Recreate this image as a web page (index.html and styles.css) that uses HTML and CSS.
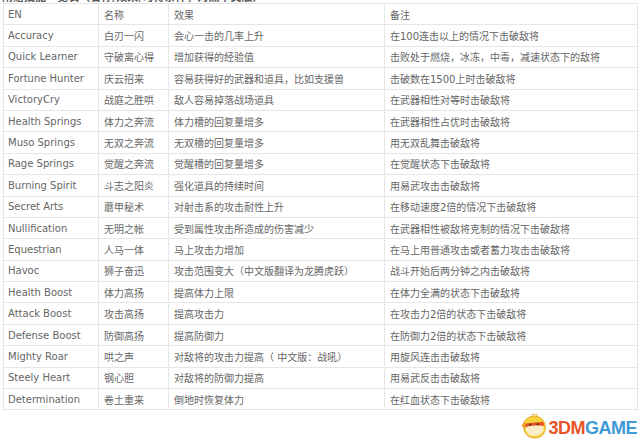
FILE: index.html
```html
<!DOCTYPE html>
<html lang="zh">
<head>
<meta charset="utf-8">
<link rel="stylesheet" href="styles.css">
</head>
<body>
<div class="caption">附赠技能一览表（名称/效果/习得条件，对照中文版）</div>
<table class="skills">
  <colgroup>
    <col class="c-en"><col class="c-name"><col class="c-eff"><col class="c-note">
  </colgroup>
  <tr><td>EN</td><td>名称</td><td>效果</td><td>备注</td></tr>
  <tr><td>Accuracy</td><td>白刃一闪</td><td>会心一击的几率上升</td><td>在100连击以上的情况下击破敌将</td></tr>
  <tr><td>Quick Learner</td><td>守破离心得</td><td>增加获得的经验值</td><td>击败处于燃烧，冰冻，中毒，减速状态下的敌将</td></tr>
  <tr><td>Fortune Hunter</td><td>庆云招来</td><td>容易获得好的武器和道具，比如支援兽</td><td>击破数在1500上时击破敌将</td></tr>
  <tr><td>VictoryCry</td><td>战庭之胜哄</td><td>敌人容易掉落战场道具</td><td>在武器相性对等时击破敌将</td></tr>
  <tr><td>Health Springs</td><td>体力之奔流</td><td>体力槽的回复量增多</td><td>在武器相性占优时击破敌将</td></tr>
  <tr><td>Muso Springs</td><td>无双之奔流</td><td>无双槽的回复量增多</td><td>用无双乱舞击破敌将</td></tr>
  <tr><td>Rage Springs</td><td>觉醒之奔流</td><td>觉醒槽的回复量增多</td><td>在觉醒状态下击破敌将</td></tr>
  <tr><td>Burning Spirit</td><td>斗志之阳炎</td><td>强化道具的持续时间</td><td>用易武攻击击破敌将</td></tr>
  <tr><td>Secret Arts</td><td>蘑甲秘术</td><td>对射击系的攻击耐性上升</td><td>在移动速度2倍的情况下击破敌将</td></tr>
  <tr><td>Nullification</td><td>无明之帐</td><td>受到属性攻击所造成的伤害减少</td><td>在武器相性被敌将克制的情况下击破敌将</td></tr>
  <tr><td>Equestrian</td><td>人马一体</td><td>马上攻击力增加</td><td>在马上用普通攻击或者蓄力攻击击破敌将</td></tr>
  <tr><td>Havoc</td><td>狮子奋迅</td><td>攻击范围变大（中文版翻译为龙腾虎跃）</td><td>战斗开始后两分钟之内击破敌将</td></tr>
  <tr><td>Health Boost</td><td>体力高扬</td><td>提高体力上限</td><td>在体力全满的状态下击破敌将</td></tr>
  <tr><td>Attack Boost</td><td>攻击高扬</td><td>提高攻击力</td><td>在攻击力2倍的状态下击破敌将</td></tr>
  <tr><td>Defense Boost</td><td>防御高扬</td><td>提高防御力</td><td>在防御力2倍的状态下击破敌将</td></tr>
  <tr><td>Mighty Roar</td><td>哄之声</td><td>对敌将的攻击力提高（ 中文版：战吼）</td><td>用旋风连击击破敌将</td></tr>
  <tr><td>Steely Heart</td><td>钢心胆</td><td>对敌将的防御力提高</td><td>用易武反击击破敌将</td></tr>
  <tr><td>Determination</td><td>卷土重来</td><td>倒地时恢复体力</td><td>在红血状态下击破敌将</td></tr>
</table>
<div class="footer">
  <div class="logo">
    <svg class="chick" width="28" height="27" viewBox="0 0 30 28">
      <path d="M4 16 C2 8 9 2 17 3 C24 4 28 10 27 17 C26 24 20 27 14 26 C8 25 5 22 4 16 Z" fill="#f7d43a" stroke="#e0a21c" stroke-width="1"/>
      <path d="M12 2 C13 0 15 0 15 2 M16 2 C17 0 19 1 18 3" stroke="#e0a21c" stroke-width="1" fill="none"/>
      <path d="M3 11 L25 9 L26 13 L4 15 Z" fill="#e8502a"/>
      <path d="M6 15 C8 13 22 12 25 14 C26 20 22 24 15 24 C9 24 6 20 6 15 Z" fill="#fbeccb"/>
      <path d="M1 13 L6 10 L6 16 Z" fill="#f39a22"/>
      <circle cx="11" cy="12" r="1.2" fill="#5a3214"/>
      <circle cx="19" cy="11.5" r="1.2" fill="#5a3214"/>
    </svg>
    <span class="brand"><span class="b3dm">3DM</span><span class="bgame">GAME</span></span>
  </div>
</div>
</body>
</html>
```
FILE: styles.css
```css
html, body {
  margin: 0;
  padding: 0;
  background: #ffffff;
}
body {
  width: 640px;
  height: 445px;
  overflow: hidden;
  font-family: "DejaVu Sans", Verdana, "Noto Sans CJK SC", sans-serif;
  font-size: 10px;
  color: #666666;
}
.caption {
  height: 12px;
  margin-top: -10px;
  overflow: hidden;
  font-family: "Noto Sans CJK SC", sans-serif;
  font-size: 11px;
  line-height: 12px;
  color: #555555;
  font-weight: bold;
  padding-left: 2px;
  white-space: nowrap;
}
.skills {
  margin-top: 1px;
  margin-left: 3px;
  width: 634px;
  border-collapse: collapse;
  table-layout: fixed;
  border: 1px solid #e4e4e4;
}
.c-en { width: 95px; }
.c-name { width: 70px; }
.c-eff { width: 216px; }
.c-note { width: 253px; }
.skills td {
  height: 20.4px;
  padding: 0 4px;
  border: 1px solid #e6e6e6;
  white-space: nowrap;
  overflow: hidden;
  vertical-align: middle;
}
.skills td:nth-child(n+2) {
  padding-left: 5px;
}
.footer {
  display: flex;
  justify-content: flex-end;
  padding-right: 3px;
  margin-top: 3px;
}
.logo {
  display: flex;
  align-items: center;
}
.chick {
  display: block;
}
.brand {
  font-family: "Liberation Sans", Arial, sans-serif;
  font-weight: bold;
  font-size: 18px;
  letter-spacing: -0.5px;
  margin-left: 0;
  margin-top: 3px;
}
.b3dm { color: #e8532a; }
.bgame { color: #3d9ad6; }
```
